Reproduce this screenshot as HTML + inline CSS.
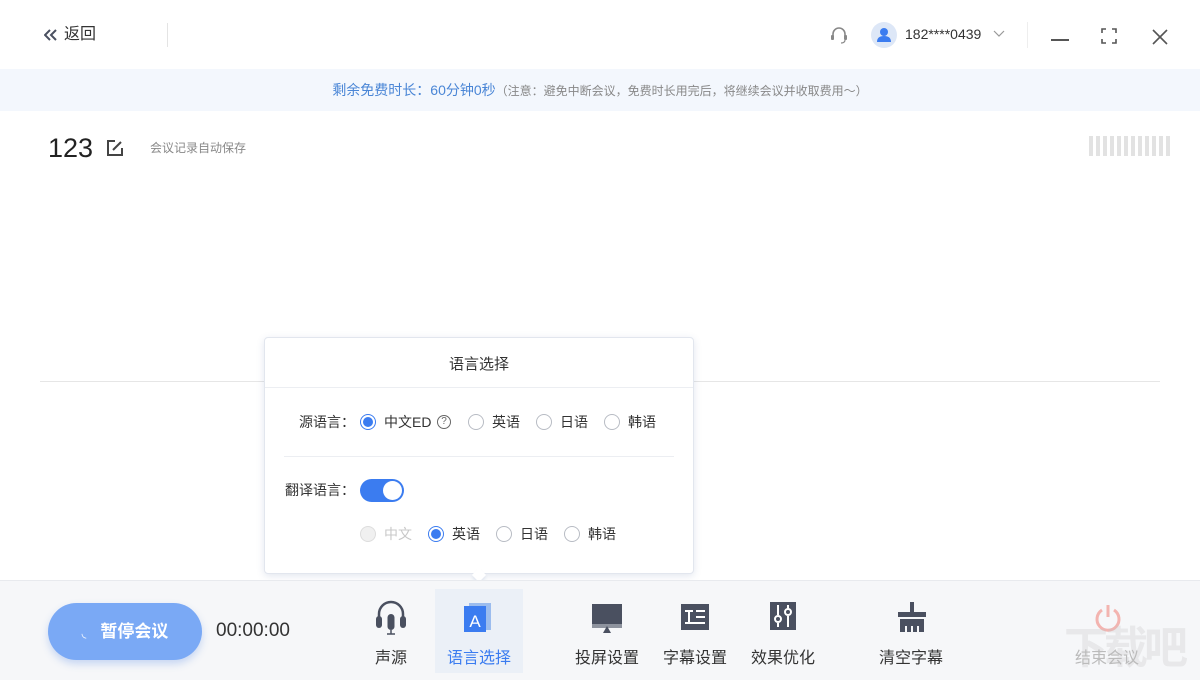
<!DOCTYPE html>
<html><head><meta charset="utf-8"><style>
*{margin:0;padding:0;box-sizing:border-box}
body{width:1200px;height:680px;background:#fff;font-family:"Liberation Sans","Noto Sans CJK SC",sans-serif;position:relative;overflow:hidden;color:#333}
.a{position:absolute}
.radio{position:absolute;width:16px;height:16px;border:1px solid #b8bcc4;border-radius:50%;background:#fff}
.radio.on{border-color:#3b7cf0}
.radio.on::after{content:"";position:absolute;left:2px;top:2px;width:10px;height:10px;border-radius:50%;background:#3b7cf0}
.radio.dis{background:#f0f0f0;border-color:#ddd}
.t{position:absolute;font-size:14px;color:#333;line-height:16px;white-space:nowrap}
.tb{position:absolute;font-size:16px;color:#333;text-align:center;width:90px;white-space:nowrap}
</style></head><body>
<!-- header -->
<svg class="a" style="left:44px;top:29px" width="13" height="12" viewBox="0 0 13 12"><path d="M6 1L1 6l5 5M12 1L7 6l5 5" fill="none" stroke="#4a5060" stroke-width="2"/></svg>
<div class="a" style="left:64px;top:24px;font-size:16px;color:#333;line-height:22px">返回</div>
<div class="a" style="left:167px;top:23px;width:1px;height:24px;background:#e4e4e4"></div>
<svg class="a" style="left:829px;top:25px" width="20" height="20" viewBox="0 0 20 20"><path d="M4 12V9a6 6 0 0 1 12 0v3" fill="none" stroke="#888" stroke-width="1.6"/><rect x="2" y="10" width="3" height="5" rx="1" fill="#888"/><rect x="15" y="10" width="3" height="5" rx="1" fill="#888"/><path d="M16 15q0 3-4 3" fill="none" stroke="#888" stroke-width="1.2"/></svg>
<div class="a" style="left:871px;top:22px;width:26px;height:26px;border-radius:50%;background:#dde7f7"></div>
<svg class="a" style="left:871px;top:22px" width="26" height="26" viewBox="0 0 26 26"><circle cx="13" cy="10" r="4" fill="#3b7cf0"/><path d="M6 20q0-6 7-6t7 6z" fill="#3b7cf0"/></svg>
<div class="a" style="left:905px;top:26px;font-size:14px;color:#333">182****0439</div>
<svg class="a" style="left:993px;top:30px" width="12" height="8"><path d="M1 1l5 5 5-5" fill="none" stroke="#999" stroke-width="1.2"/></svg>
<div class="a" style="left:1027px;top:22px;width:1px;height:26px;background:#eee"></div>
<div class="a" style="left:1051px;top:39px;width:18px;height:2px;background:#555"></div>
<svg class="a" style="left:1101px;top:28px" width="16" height="16" viewBox="0 0 16 16"><path d="M1 5V1h4M11 1h4v4M15 11v4h-4M5 15H1v-4" fill="none" stroke="#555" stroke-width="1.6"/></svg>
<svg class="a" style="left:1152px;top:29px" width="16" height="16"><path d="M1 1l14 14M15 1L1 15" stroke="#555" stroke-width="1.6"/></svg>
<!-- banner -->
<div class="a" style="left:0;top:69px;width:1200px;height:42px;background:#f3f7fd"></div>
<div class="a" style="left:0;top:80px;width:1200px;text-align:center;font-size:14px;line-height:20px;white-space:nowrap"><span style="color:#4a86d6">剩余免费时长：60分钟0秒</span><span style="color:#888;font-size:12px">（注意：避免中断会议，免费时长用完后，将继续会议并收取费用～）</span></div>
<div class="a" style="left:48px;top:131px;font-size:27px;color:#222;line-height:34px">123</div>
<svg class="a" style="left:106px;top:139px" width="18" height="18" viewBox="0 0 18 18"><path d="M9 2H2v14h14V9" fill="none" stroke="#444" stroke-width="2"/><path d="M7 11l8-8" stroke="#444" stroke-width="2"/></svg>
<div class="a" style="left:150px;top:139px;font-size:12px;color:#888">会议记录自动保存</div>
<div class="a" style="left:1089px;top:136px;width:82px;height:20px;background:repeating-linear-gradient(90deg,#e2e2e2 0 4px,transparent 4px 7px)"></div>
<div class="a" style="left:40px;top:381px;width:1120px;height:1px;background:#e6e6e6"></div>
<!-- popup -->
<div class="a" style="left:264px;top:337px;width:430px;height:237px;background:#fff;border:1px solid #e2e6ee;border-radius:4px;box-shadow:0 2px 8px rgba(60,90,150,.15)"></div>
<div class="a" style="left:474px;top:570px;width:10px;height:10px;background:#fff;transform:rotate(45deg);box-shadow:2px 2px 3px rgba(60,90,150,.12)"></div>
<div class="a" style="left:264px;top:353px;width:430px;text-align:center;font-size:15px;color:#333">语言选择</div>
<div class="a" style="left:265px;top:387px;width:428px;height:1px;background:#eceef2"></div>
<div class="t" style="left:299px;top:414px">源语言：</div>
<div class="radio on" style="left:360px;top:414px"></div><div class="t" style="left:384px;top:414px">中文ED</div>
<div class="a" style="left:437px;top:415px;width:14px;height:14px;border:1px solid #666;border-radius:50%;font-size:10px;line-height:12px;text-align:center;color:#666">?</div>
<div class="radio" style="left:468px;top:414px"></div><div class="t" style="left:492px;top:414px">英语</div>
<div class="radio" style="left:536px;top:414px"></div><div class="t" style="left:560px;top:414px">日语</div>
<div class="radio" style="left:604px;top:414px"></div><div class="t" style="left:628px;top:414px">韩语</div>
<div class="a" style="left:284px;top:456px;width:390px;height:1px;background:#eceef2"></div>
<div class="t" style="left:285px;top:482px">翻译语言：</div>
<div class="a" style="left:360px;top:479px;width:44px;height:23px;border-radius:12px;background:#3b7cf0"></div>
<div class="a" style="left:383px;top:481px;width:19px;height:19px;border-radius:50%;background:#fff"></div>
<div class="radio dis" style="left:360px;top:526px"></div><div class="t" style="left:384px;top:526px;color:#c8c8c8">中文</div>
<div class="radio on" style="left:428px;top:526px"></div><div class="t" style="left:452px;top:526px">英语</div>
<div class="radio" style="left:496px;top:526px"></div><div class="t" style="left:520px;top:526px">日语</div>
<div class="radio" style="left:564px;top:526px"></div><div class="t" style="left:588px;top:526px">韩语</div>
<!-- bottom bar -->
<div class="a" style="left:0;top:580px;width:1200px;height:100px;background:#f6f7f9;border-top:1px solid #e8eaee"></div>
<div class="a" style="left:48px;top:603px;width:154px;height:57px;border-radius:29px;background:#7aa9f5;box-shadow:0 4px 8px rgba(90,140,230,.3)"></div>
<div class="a" style="left:48px;top:620px;width:154px;text-align:center;color:#fff;font-size:17px;font-weight:bold;line-height:24px;white-space:nowrap"><span style="font-weight:normal;font-size:12px">◟</span>&nbsp;&nbsp; 暂停会议</div>
<div class="a" style="left:216px;top:620px;font-size:19px;color:#333">00:00:00</div>
<div class="a" style="left:435px;top:589px;width:88px;height:84px;background:#ebf0f7"></div>
<svg class="a" style="left:373px;top:599px" width="36" height="36" viewBox="0 0 36 36"><path d="M6 20V15a12 12 0 0 1 24 0v5" fill="none" stroke="#4a5060" stroke-width="2.5"/><rect x="3" y="17" width="6" height="12" rx="3" fill="#4a5060"/><rect x="27" y="17" width="6" height="12" rx="3" fill="#4a5060"/><rect x="14.5" y="15" width="7" height="16" rx="3.5" fill="#4a5060"/><path d="M18 31v4M14 35h8" stroke="#4a5060" stroke-width="1.5"/></svg>
<div class="tb" style="left:346px;top:644px">声源</div>
<svg class="a" style="left:462px;top:602px" width="30" height="30" viewBox="0 0 30 30"><rect x="7" y="1" width="22" height="27" fill="#9bbcee"/><rect x="2" y="4" width="22" height="26" fill="#3b7cf0"/><text x="13" y="25" font-size="17" font-family="Liberation Sans" fill="#fff" text-anchor="middle">A</text></svg>
<div class="tb" style="left:434px;top:644px;color:#3b7cf0">语言选择</div>
<svg class="a" style="left:591px;top:603px" width="32" height="30" viewBox="0 0 32 30"><rect x="1" y="1" width="30" height="20" fill="#4a5060"/><rect x="1" y="21" width="30" height="4" fill="#4a5060" opacity=".6"/><path d="M12 30l4-7 4 7z" fill="#4a5060"/></svg>
<div class="tb" style="left:562px;top:644px">投屏设置</div>
<svg class="a" style="left:681px;top:604px" width="28" height="26" viewBox="0 0 28 26"><rect width="28" height="26" fill="#4a5060"/><path d="M4 7h8M8 7v12M4 19h20M15 7h9M15 13h9" stroke="#fff" stroke-width="2"/></svg>
<div class="tb" style="left:650px;top:644px">字幕设置</div>
<svg class="a" style="left:770px;top:602px" width="26" height="28" viewBox="0 0 26 28"><rect width="26" height="28" fill="#4a5060"/><path d="M8 3v10M8 21v4M18 3v4M18 14v11" stroke="#fff" stroke-width="2"/><circle cx="8" cy="17" r="3" fill="none" stroke="#fff" stroke-width="2"/><circle cx="18" cy="10" r="3" fill="none" stroke="#fff" stroke-width="2"/></svg>
<div class="tb" style="left:738px;top:644px">效果优化</div>
<svg class="a" style="left:897px;top:602px" width="30" height="30" viewBox="0 0 30 30"><rect x="13" y="0" width="4" height="10" fill="#4a5060"/><rect x="1" y="10" width="28" height="5" fill="#4a5060"/><path d="M3 17h24v13H3z" fill="#4a5060"/><path d="M9 24v6M15 24v6M21 24v6" stroke="#f6f7f9" stroke-width="2"/></svg>
<div class="tb" style="left:866px;top:644px">清空字幕</div>
<svg class="a" style="left:1093px;top:603px" width="30" height="30" viewBox="0 0 30 30"><path d="M9 7a11 11 0 1 0 12 0" fill="none" stroke="#f3b4b0" stroke-width="3"/><path d="M15 2v12" stroke="#f3b4b0" stroke-width="3"/></svg>
<div class="a" style="left:1064px;top:624px;font-size:44px;color:rgba(200,200,200,.3);font-weight:bold;line-height:50px;letter-spacing:-4px;white-space:nowrap">下载吧</div>
<div class="tb" style="left:1062px;top:644px;color:#bbb">结束会议</div>
</body></html>
